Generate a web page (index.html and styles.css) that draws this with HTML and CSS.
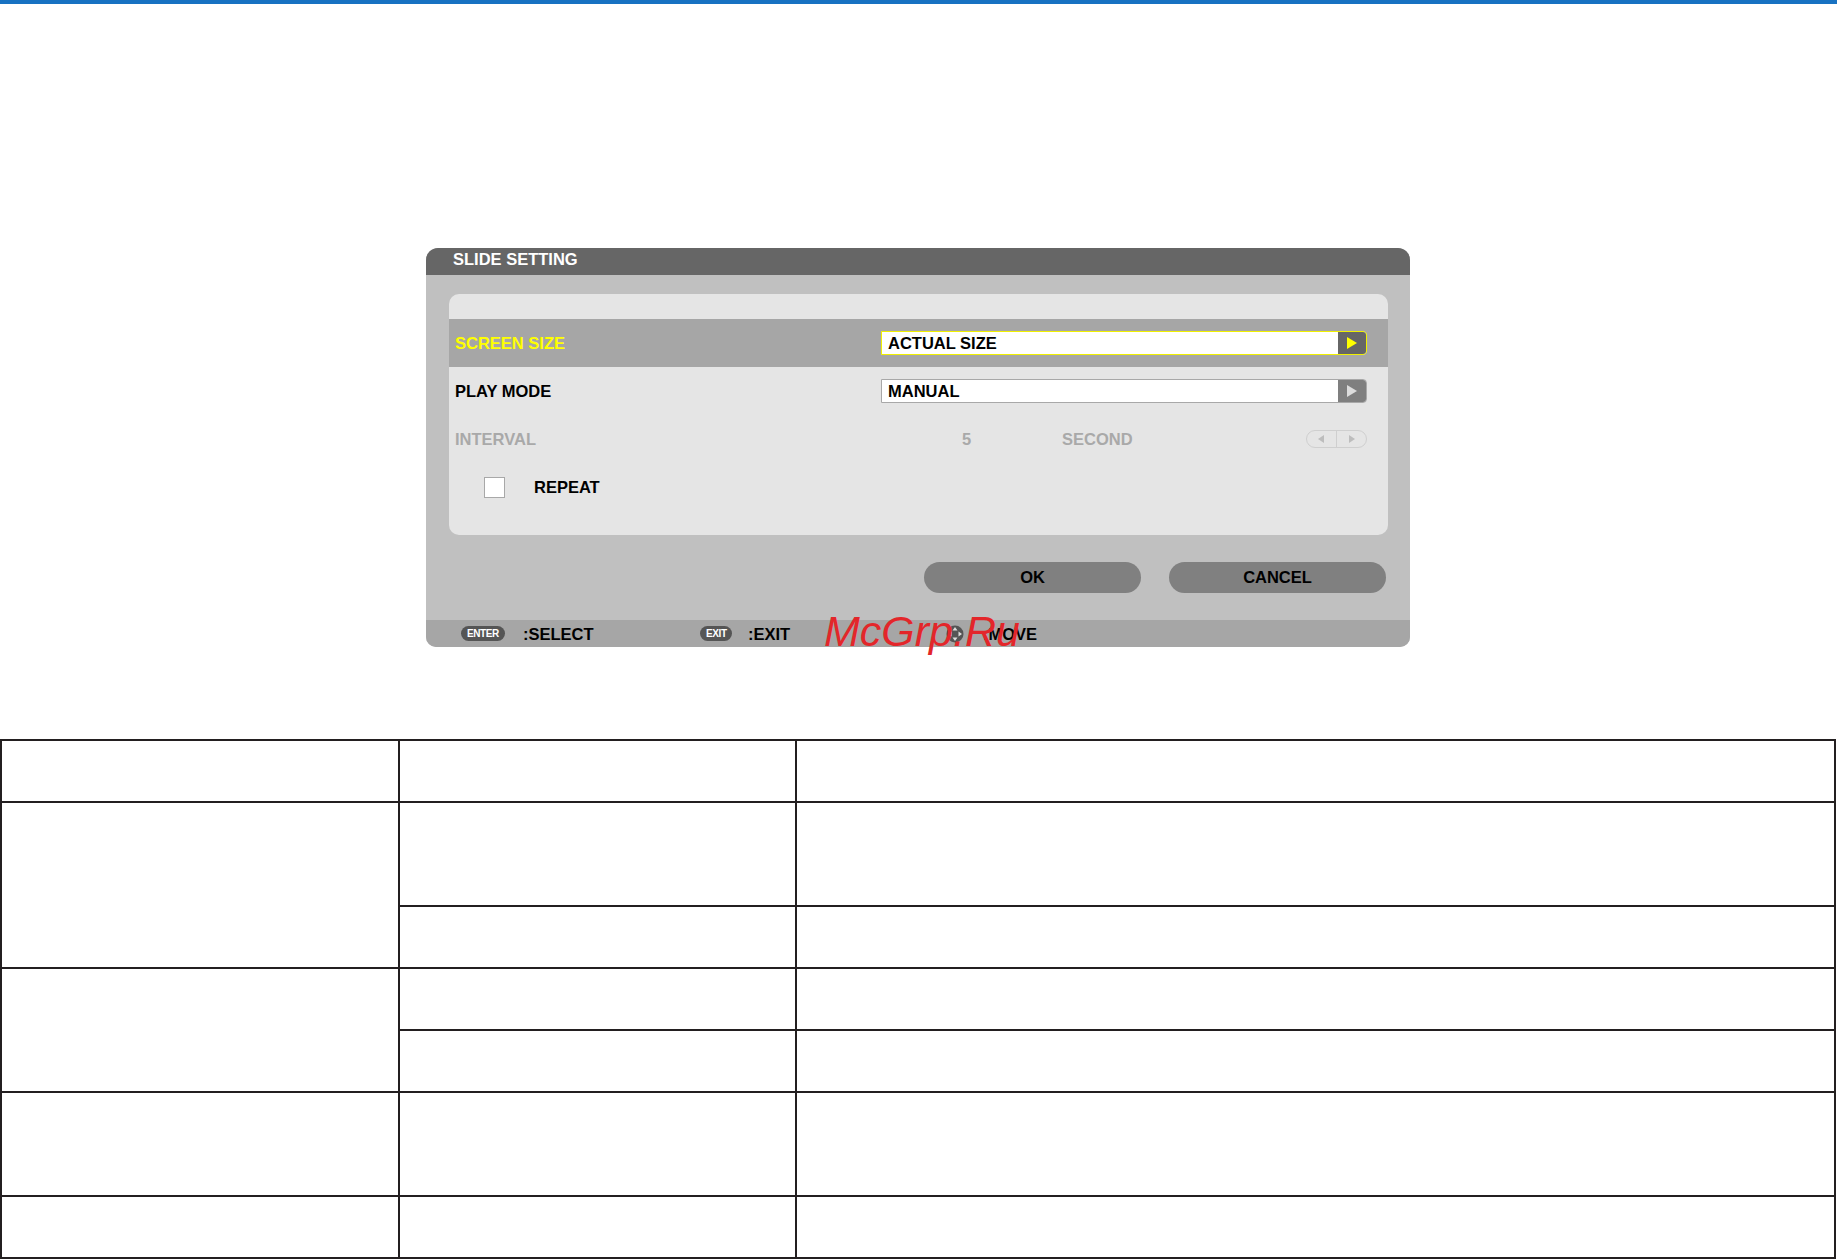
FILE: index.html
```html
<!DOCTYPE html>
<html lang="en">

<head>
    <meta charset="UTF-8">
    <title>SLIDE SETTING</title>
    <link rel="stylesheet" href="styles.css">
</head>

<body>
    <div class="topbar"></div>

    <div class="stage">
        <div class="dialog">
            <div class="dialog-title">SLIDE SETTING</div>

            <div class="dialog-body">
                <div class="panel">
                    <div class="row selected">
                        <div class="label">SCREEN SIZE</div>
                        <div class="value">
                            <div class="select">
                                <span class="select-text">ACTUAL SIZE</span>
                                <span class="select-arrow">
                                    <svg width="12" height="12" viewBox="0 0 12 12"><polygon points="1,0 11,6 1,12" /></svg>
                                </span>
                            </div>
                        </div>
                    </div>

                    <div class="row">
                        <div class="label">PLAY MODE</div>
                        <div class="value">
                            <div class="select">
                                <span class="select-text">MANUAL</span>
                                <span class="select-arrow">
                                    <svg width="12" height="12" viewBox="0 0 12 12"><polygon points="1,0 11,6 1,12" /></svg>
                                </span>
                            </div>
                        </div>
                    </div>

                    <div class="row disabled">
                        <div class="label">INTERVAL</div>
                        <div class="value">
                            <span class="num">5</span>
                            <span class="unit">SECOND</span>
                            <span class="spinner">
                                <span class="spin-half">
                                    <svg width="7" height="8" viewBox="0 0 7 8"><polygon points="6,0 0,4 6,8" /></svg>
                                </span>
                                <span class="spin-half">
                                    <svg width="7" height="8" viewBox="0 0 7 8"><polygon points="1,0 7,4 1,8" /></svg>
                                </span>
                            </span>
                        </div>
                    </div>

                    <div class="row check">
                        <span class="checkbox"></span>
                        <span class="check-label">REPEAT</span>
                    </div>
                </div>

                <div class="buttons">
                    <div class="but">OK</div>
                    <div class="but">CANCEL</div>
                </div>
            </div>

            <div class="dialog-foot">
                <div class="hint hint-select">
                    <span class="key key-enter">ENTER</span>
                    <span>:SELECT</span>
                </div>
                <div class="hint hint-exit">
                    <span class="key key-exit">EXIT</span>
                    <span>:EXIT</span>
                </div>
                <div class="hint hint-move">
                    <span class="dial">
                        <svg width="18" height="18" viewBox="0 0 18 18">
                            <circle cx="9" cy="9" r="8.5" fill="#555" />
                            <polygon points="9,2 11.5,5.5 6.5,5.5" fill="#ddd" />
                            <polygon points="9,16 11.5,12.5 6.5,12.5" fill="#ddd" />
                            <polygon points="2,9 5.5,6.5 5.5,11.5" fill="#ddd" />
                            <polygon points="16,9 12.5,6.5 12.5,11.5" fill="#ddd" />
                        </svg>
                    </span>
                    <span>:MOVE</span>
                </div>
                <div class="mark">McGrp.Ru</div>
            </div>
        </div>
    </div>

    <table class="grid">
        <colgroup>
            <col class="c1">
            <col class="c2">
            <col>
        </colgroup>
        <tr class="short">
            <td></td>
            <td></td>
            <td></td>
        </tr>
        <tr class="tall">
            <td rowspan="2"></td>
            <td></td>
            <td></td>
        </tr>
        <tr class="short">
            <td></td>
            <td></td>
        </tr>
        <tr class="short">
            <td rowspan="2"></td>
            <td></td>
            <td></td>
        </tr>
        <tr class="short">
            <td></td>
            <td></td>
        </tr>
        <tr class="tall">
            <td></td>
            <td></td>
            <td></td>
        </tr>
        <tr class="short">
            <td></td>
            <td></td>
            <td></td>
        </tr>
    </table>
</body>

</html>
```

FILE: styles.css
```css
html,
body {
    margin: 0;
    background-color: #fff;
    font-family: "Liberation Sans", Arial, sans-serif;
}

.topbar {
    height: 4px;
    background-color: #1872c2;
}

.stage {
    padding: 244px 0 0 426px;
}

/* projector style menu window */
.dialog {
    width: 984px;
    border-radius: 12px 12px 10px 10px;
    background-color: #c0c0c0;
    font-size: 16.5px;
    font-weight: bold;
    color: #000;
}

.dialog-title {
    height: 27px;
    line-height: 22px;
    padding-left: 27px;
    background-color: #666;
    color: #fff;
    border-radius: 12px 12px 0 0;
}

.dialog-body {
    padding: 19px 22px 0 23px;
}

.panel {
    padding: 25px 0 24px 0;
    background-color: #e5e5e5;
    border-radius: 10px;
}

.row {
    display: flex;
    align-items: center;
    height: 48px;
    padding: 0 21px 0 6px;
}

.row.selected {
    background-color: #a6a6a6;
}

.label {
    width: 426px;
    line-height: 48px;
}

.selected .label {
    color: #ffff00;
}

.disabled {
    color: #a9a9a9;
}

.value {
    flex: 1;
    display: flex;
    align-items: center;
}

.select {
    flex: 1;
    display: flex;
    height: 24px;
    box-sizing: border-box;
    border: 1px solid #a8a8a8;
    border-radius: 0 4px 4px 0;
    background-color: #fff;
}

.selected .select {
    border-color: #f0f000;
}

.select-text {
    flex: 1;
    line-height: 22px;
    padding-left: 6px;
}

.select-arrow {
    width: 28px;
    display: flex;
    align-items: center;
    justify-content: center;
    background-color: #7f7f7f;
    border-radius: 0 3px 3px 0;
    fill: #dcdcdc;
}

.selected .select-arrow {
    background-color: #666;
    fill: #ffff00;
}

.num {
    width: 181px;
    padding-left: 81px;
    box-sizing: border-box;
}

.unit {
    flex: 1;
}

.spinner {
    display: flex;
    width: 61px;
    height: 18px;
    box-sizing: border-box;
    border: 1px solid #cfcfcf;
    border-radius: 9px;
}

.spin-half {
    flex: 1;
    display: flex;
    align-items: center;
    justify-content: center;
    fill: #bdbdbd;
}

.spin-half + .spin-half {
    border-left: 1px solid #cfcfcf;
}

.row.check {
    padding-left: 35px;
}

.checkbox {
    width: 21px;
    height: 21px;
    box-sizing: border-box;
    border: 1px solid #a8a8a8;
    background-color: #fff;
}

.check-label {
    margin-left: 29px;
}

.buttons {
    display: flex;
    justify-content: flex-end;
    gap: 28px;
    padding: 27px 2px 27px 0;
}

.but {
    width: 217px;
    height: 31px;
    line-height: 31px;
    text-align: center;
    background-color: #808080;
    border-radius: 16px;
}

.dialog-foot {
    position: relative;
    display: flex;
    align-items: center;
    height: 27px;
    line-height: 28px;
    padding-left: 35px;
    background-color: #a6a6a6;
    border-radius: 0 0 10px 10px;
}

.hint {
    display: flex;
    align-items: center;
}

.hint-select {
    width: 239px;
}

.hint-exit {
    width: 246px;
}

.key {
    height: 15px;
    line-height: 15px;
    padding: 0 6px;
    border-radius: 8px;
    background-color: #555;
    color: #fff;
    font-size: 10px;
    letter-spacing: -0.4px;
    margin-right: 18px;
}

.key-enter {
    width: 32px;
}

.key-exit {
    width: 20px;
    margin-right: 16px;
}

.dial {
    display: flex;
    margin-right: 19px;
}

/* site stamp laid over the footer */
.mark {
    position: absolute;
    left: 398px;
    top: -10px;
    font-size: 43px;
    line-height: 43px;
    font-weight: normal;
    font-style: italic;
    color: #e3262a;
}

.grid {
    margin-top: 92px;
    width: 1836px;
    table-layout: fixed;
    border-collapse: collapse;
}

.grid td {
    border: 2px solid #231f20;
    padding: 0;
}

.grid .c1 {
    width: 398px;
}

.grid .c2 {
    width: 397px;
}

.grid .short td {
    height: 60px;
}

.grid .tall td {
    height: 102px;
}
```
